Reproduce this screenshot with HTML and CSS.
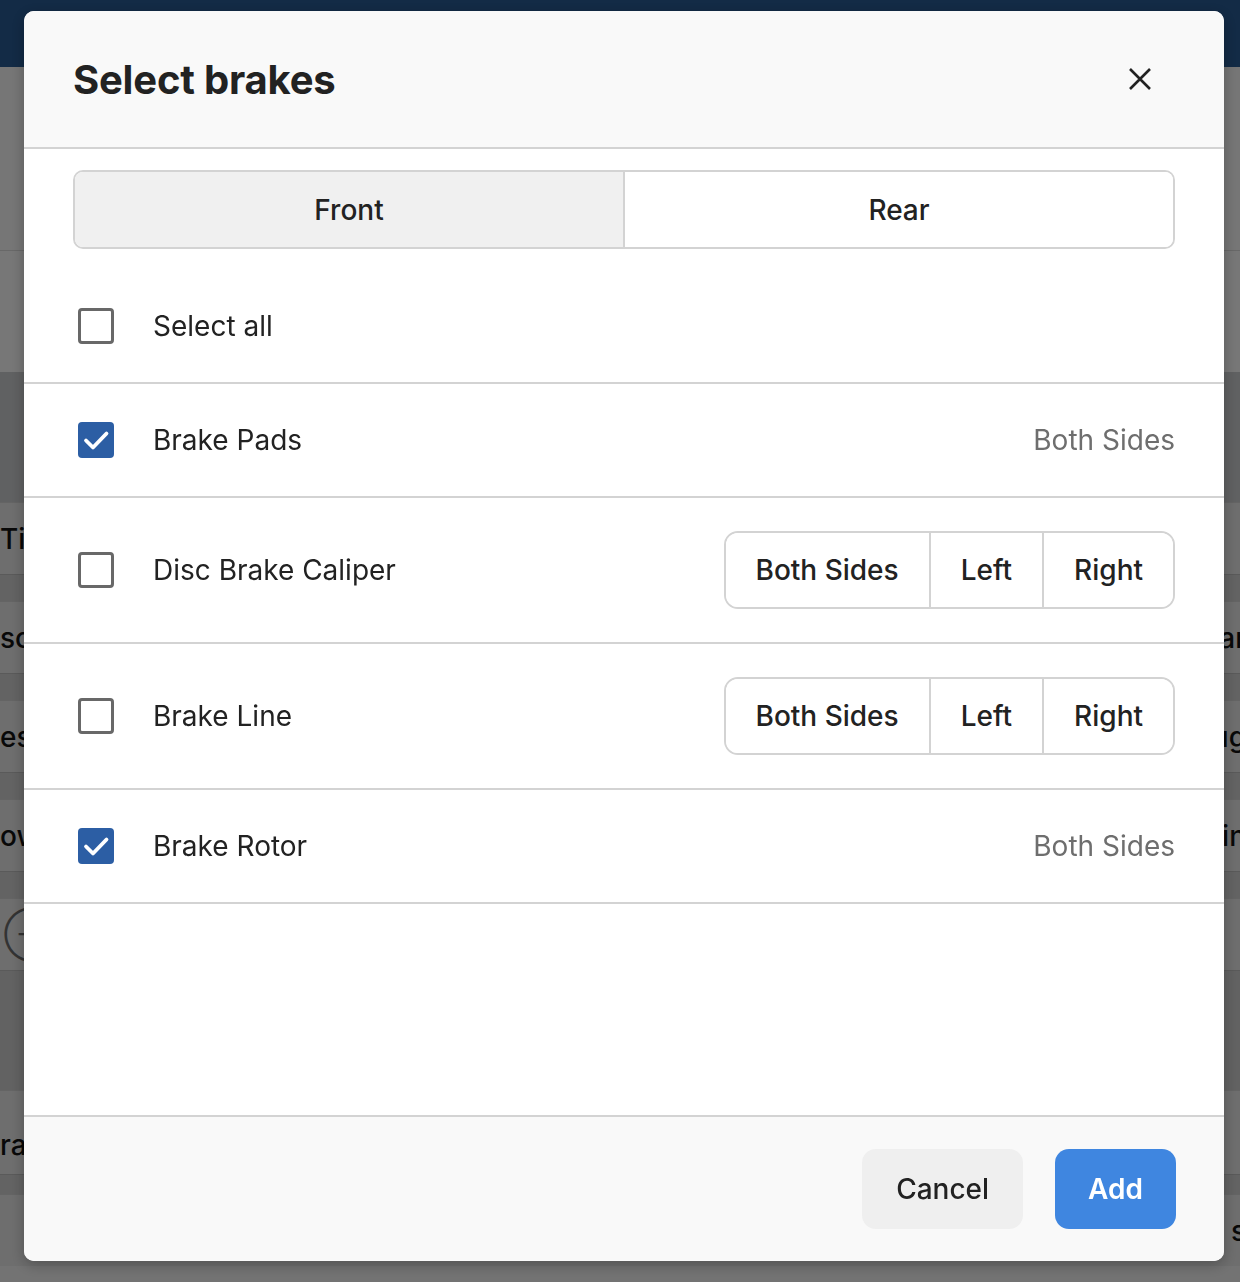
FILE: index.html
```html
<!DOCTYPE html>
<html lang="en">
<head>
    <meta charset="UTF-8">
    <meta name="viewport" content="width=device-width, initial-scale=1.0">
    <title>Select brakes</title>
    <link rel="stylesheet" href="styles.css">
</head>
<body>
    <!-- Page behind the dialog -->
    <header class="topbar"></header>
    <div class="toolbar"></div>
    <div class="filters"></div>
    <div class="summary"></div>
    <div class="parts">
        <div class="part-row"><span class="part-left">Ti</span></div>
        <div class="part-gap"></div>
        <div class="part-row"><span class="part-left">sc</span><span class="part-right">ar</span></div>
        <div class="part-gap"></div>
        <div class="part-row"><span class="part-left">es</span><span class="part-right">ug</span></div>
        <div class="part-gap"></div>
        <div class="part-row"><span class="part-left">ow</span><span class="part-right">in</span></div>
        <div class="part-gap"></div>
        <div class="part-row"><span class="part-left add-icon">&oplus;</span></div>
        <div class="part-block"></div>
        <div class="part-row tall"><span class="part-left">ra</span></div>
        <div class="part-gap short"></div>
        <div class="part-row"><span class="part-left"></span><span class="part-right">s</span></div>
    </div>

    <!-- Dialog -->
    <div class="overlay">
        <div class="modal">
            <div class="modal-header">
                <h2>Select brakes</h2>
                <button class="close-btn" aria-label="Close">
                    <svg width="24" height="24" viewBox="0 0 24 24"><path d="M2 2 L22 22 M22 2 L2 22" stroke="#222" stroke-width="2.6" fill="none"/></svg>
                </button>
            </div>

            <div class="modal-body">
                <div class="axle-tabs">
                    <button class="axle-tab active">Front</button>
                    <button class="axle-tab">Rear</button>
                </div>

                <div class="brake-row select-all">
                    <span class="check"><span class="box"></span></span>
                    <span class="label">Select all</span>
                </div>

                <div class="brake-row">
                    <span class="check"><span class="box checked"><svg width="36" height="36" viewBox="0 0 36 36"><path d="M8 18.5 L15 25.5 L28.5 11.5" stroke="#fff" stroke-width="3.8" fill="none" stroke-linecap="round" stroke-linejoin="round"/></svg></span></span>
                    <span class="label">Brake Pads</span>
                    <span class="side-text">Both Sides</span>
                </div>

                <div class="brake-row">
                    <span class="check"><span class="box"></span></span>
                    <span class="label">Disc Brake Caliper</span>
                    <div class="side-picker">
                        <button>Both Sides</button>
                        <button>Left</button>
                        <button>Right</button>
                    </div>
                </div>

                <div class="brake-row">
                    <span class="check"><span class="box"></span></span>
                    <span class="label">Brake Line</span>
                    <div class="side-picker">
                        <button>Both Sides</button>
                        <button>Left</button>
                        <button>Right</button>
                    </div>
                </div>

                <div class="brake-row">
                    <span class="check"><span class="box checked"><svg width="36" height="36" viewBox="0 0 36 36"><path d="M8 18.5 L15 25.5 L28.5 11.5" stroke="#fff" stroke-width="3.8" fill="none" stroke-linecap="round" stroke-linejoin="round"/></svg></span></span>
                    <span class="label">Brake Rotor</span>
                    <span class="side-text">Both Sides</span>
                </div>
            </div>

            <div class="modal-footer">
                <button class="btn btn-cancel">Cancel</button>
                <button class="btn btn-add">Add</button>
            </div>
        </div>
    </div>
</body>
</html>
```

FILE: styles.css
```css
body { font-family: Inter, "Noto Sans", sans-serif; background-color: #e6e6e6; margin: 0; padding: 0; color: #222; overflow: hidden; }
button { font-family: inherit; cursor: pointer; }

/* background page */
.topbar { height: 67px; background-color: #26568c; }
.toolbar { height: 183px; background-color: #ececec; border-bottom: 1px solid #d0d0d0; }
.filters { height: 121px; background-color: #eeeeee; }
.summary { height: 130px; background-color: #c0c2c4; }
.parts { background-color: #dcdcdc; }
.part-row { height: 71px; display: flex; justify-content: space-between; align-items: center; font-size: 28px; font-weight: 500; color: #111; border-top: 1px solid #c8c8c8; }
.part-row.tall { height: 84px; padding-top: 24px; box-sizing: border-box; }
.part-gap { height: 26px; background-color: #c6c6c6; border-top: 1px solid #b4b4b4; }
.part-gap.short { height: 19px; }
.part-block { height: 119px; background-color: #c4c4c4; border-top: 1px solid #b4b4b4; }
.add-icon { color: #666; font-size: 40px; font-weight: 300; margin-left: 4px; }
.part-right { margin-right: -6px; }

/* dialog */
.overlay { position: fixed; top: 0; left: 0; right: 0; bottom: 0; background: rgba(0, 0, 0, 0.5); padding: 11px 16px 0 24px; }
.modal { width: 1200px; height: 1250px; background: white; border-radius: 10px; display: flex; flex-direction: column; overflow: hidden; box-shadow: 0 4px 14px rgba(0, 0, 0, 0.25); }

.modal-header { height: 136px; flex-shrink: 0; background-color: #f9f9f9; border-bottom: 2px solid #d3d3d3; display: flex; align-items: center; justify-content: space-between; padding: 0 49px; }
.modal-header h2 { margin: 0; font-size: 40px; font-weight: 700; color: #222; letter-spacing: -0.2px; }
.close-btn { width: 46px; height: 46px; border: none; background: none; padding: 0; margin-right: 12px; display: flex; align-items: center; justify-content: center; }

.modal-body { flex: 1; padding-top: 21px; }

.axle-tabs { display: flex; margin: 0 49px 21px; height: 79px; border: 2px solid #d3d3d3; border-radius: 10px; overflow: hidden; box-sizing: border-box; }
.axle-tab { flex: 1; border: none; background: white; font-size: 28px; font-weight: 500; color: #222; }
.axle-tab.active { background-color: #f0f0f0; border-right: 2px solid #d3d3d3; }

.brake-row { display: flex; align-items: center; min-height: 46px; padding: 33px 49px; border-bottom: 2px solid #d3d3d3; }
.check { width: 46px; height: 46px; display: flex; align-items: center; justify-content: center; margin-right: 34px; }
.box { width: 36px; height: 36px; box-sizing: border-box; border: 3px solid #686868; border-radius: 4px; display: block; }
.box.checked { border: none; background-color: #2c5ea4; }
.box svg { display: block; }
.label { flex: 1; font-size: 28px; color: #222; }
.side-text { font-size: 28px; color: #6e6e6e; }

.side-picker { display: flex; height: 78px; border: 2px solid #d3d3d3; border-radius: 14px; overflow: hidden; box-sizing: border-box; }
.side-picker button { border: none; background: white; padding: 0 30px; font-size: 28px; font-weight: 500; color: #222; }
.side-picker button + button { border-left: 2px solid #d3d3d3; }

.modal-footer { flex-shrink: 0; background-color: #f9f9f9; border-top: 2px solid #d3d3d3; display: flex; justify-content: flex-end; gap: 32px; padding: 32px 48px; }
.btn { height: 80px; border: none; border-radius: 14px; font-size: 28px; font-weight: 500; padding: 0 34px; }
.btn-cancel { background-color: #efefef; color: #222; }
.btn-add { background-color: #3f86e0; color: white; font-weight: 600; padding: 0 33px; }
```
